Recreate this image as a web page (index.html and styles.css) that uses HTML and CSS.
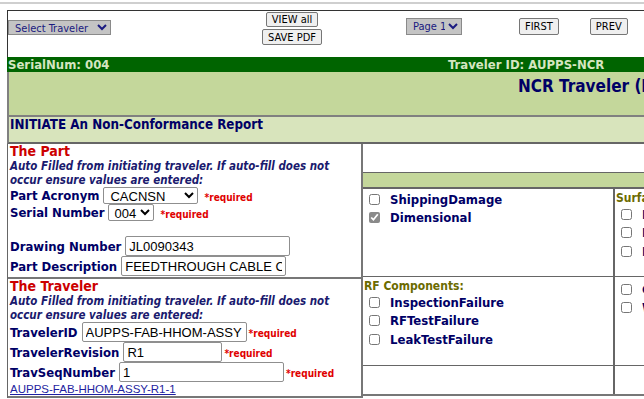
FILE: index.html
```html
<!DOCTYPE html>
<html lang="en">
<head>
    <meta charset="UTF-8">
    <title>NCR Traveler</title>
    <link rel="stylesheet" href="styles.css">
</head>
<body>
    <div class="topline"></div>
    <div class="page">
        <!-- navigation bar -->
        <div class="toolbar">
            <select class="nav-select traveler-select"><option>Select Traveler</option></select>
            <div class="btn-stack">
                <button class="btn">VIEW all</button>
                <button class="btn">SAVE PDF</button>
            </div>
            <select class="nav-select page-select"><option>Page 1</option></select>
            <button class="btn btn-first">FIRST</button>
            <button class="btn btn-prev">PREV</button>
            <button class="btn btn-prev">NEXT</button>
        </div>

        <div class="idbar">
            <span>SerialNum: 004</span>
            <span>Traveler ID: AUPPS-NCR</span>
        </div>
        <div class="titlebar"><h2>NCR Traveler (Non-Conformance Report)</h2></div>
        <div class="stepbar">INITIATE An Non-Conformance Report</div>

        <div class="form-grid">
            <div class="left-col">
                <!-- part info -->
                <div class="block block-part">
                    <h3>The Part</h3>
                    <p class="note">Auto Filled from initiating traveler. If auto-fill does not<br>occur ensure values are entered:</p>
                    <div class="field f-sel">
                        <label>Part Acronym</label>
                        <select class="fld-select acronym"><option>CACNSN</option></select>
                        <span class="req req-sel">*required</span>
                    </div>
                    <div class="field f-sel">
                        <label>Serial Number</label>
                        <select class="fld-select serial"><option>004</option></select>
                        <span class="req req-sel">*required</span>
                    </div>
                    <div class="field f-gap">
                        <label>Drawing Number</label>
                        <input class="txt" type="text" value="JL0090343">
                    </div>
                    <div class="field">
                        <label>Part Description</label>
                        <input class="txt" type="text" value="FEEDTHROUGH CABLE CONNECTOR">
                    </div>
                </div>

                <!-- traveler info -->
                <div class="block block-trav">
                    <h3>The Traveler</h3>
                    <p class="note">Auto Filled from initiating traveler. If auto-fill does not<br>occur ensure values are entered:</p>
                    <div class="field">
                        <label>TravelerID</label>
                        <input class="txt" type="text" value="AUPPS-FAB-HHOM-ASSY">
                        <span class="req">*required</span>
                    </div>
                    <div class="field">
                        <label>TravelerRevision</label>
                        <input class="txt short" type="text" value="R1">
                        <span class="req">*required</span>
                    </div>
                    <div class="field">
                        <label>TravSeqNumber</label>
                        <input class="txt" type="text" value="1">
                        <span class="req">*required</span>
                    </div>
                    <a class="trav-link" href="#">AUPPS-FAB-HHOM-ASSY-R1-1</a>
                </div>
            </div>

            <div class="right-col">
                <div class="spacer"></div>
                <div class="cat-table">
                    <div class="cat-head"></div>
                    <div class="cat-grid">
                        <div class="cat-cell row1 first">
                            <div class="chk"><input type="checkbox"><span>ShippingDamage</span></div>
                            <div class="chk"><input type="checkbox" checked><span>Dimensional</span></div>
                        </div>
                        <div class="cat-cell row1 col2">
                            <div class="cat-label">Surface Finish:</div>
                            <div class="chk"><input type="checkbox"><span>Pitting</span></div>
                            <div class="chk"><input type="checkbox"><span>Porosity</span></div>
                            <div class="chk"><input type="checkbox"><span>Plating</span></div>
                        </div>
                        <div class="cat-cell row2">
                            <div class="cat-label">RF Components:</div>
                            <div class="chk"><input type="checkbox"><span>InspectionFailure</span></div>
                            <div class="chk"><input type="checkbox"><span>RFTestFailure</span></div>
                            <div class="chk"><input type="checkbox"><span>LeakTestFailure</span></div>
                        </div>
                        <div class="cat-cell row2 col2">
                            <div class="chk"><input type="checkbox"><span>Contamination</span></div>
                            <div class="chk"><input type="checkbox"><span>Workmanship</span></div>
                        </div>
                        <div class="cat-cell row3"></div>
                        <div class="cat-cell row3 col2"></div>
                    </div>
                </div>
            </div>
        </div>
    </div>
</body>
</html>
```

FILE: styles.css
```css
body {
    margin: 0;
    overflow: hidden;
    background: #fff;
    font-family: "DejaVu Sans Condensed", "DejaVu Sans", Verdana, sans-serif;
    font-stretch: condensed;
    color: #000080;
}

.topline {
    margin-top: 2px;
    height: 2px;
    background: #cfcfcf;
}

.page {
    width: 1100px;
    margin: 6px 0 0 7px;
}

/* top navigation */
.toolbar {
    display: flex;
    align-items: flex-start;
    height: 46px;
    border-top: 1px solid #333;
    border-left: 1px solid #333;
}

.nav-select {
    height: 15px;
    padding: 0 0 0 2px;
    font-family: inherit;
    font-size: 11px;
    color: #1a1a80;
    background-color: #c4c4c4;
    border: 1px solid #8a8a8a;
    border-radius: 0;
}

.traveler-select {
    width: 103px;
    margin-top: 9px;
}

.page-select {
    width: 56px;
    height: 17px;
    margin: 7px 0 0 84px;
}

.btn-stack {
    display: flex;
    flex-direction: column;
    align-items: center;
    gap: 2px;
    margin: 1px 0 0 151px;
}

.btn {
    height: 15px;
    padding: 0 5px;
    font-family: inherit;
    font-size: 11px;
    line-height: 13px;
    color: #000;
    background: #efefef;
    border: 1px solid #767676;
    border-radius: 2px;
}

.btn-stack .btn + .btn {
    height: 16px;
}

.btn-first {
    height: 17px;
    margin: 7px 0 0 57px;
}

.btn-prev {
    height: 17px;
    margin: 7px 0 0 31px;
}

/* header bars */
.idbar {
    display: grid;
    grid-template-columns: 440px 1fr;
    height: 15px;
    padding-left: 1px;
    background: #006400;
    color: #d5e6c0;
    font-size: 13px;
    font-weight: bold;
    line-height: 15px;
}

.titlebar {
    height: 43px;
    background: #c4d79b;
    border-left: 2px solid #808080;
    border-bottom: 2px solid #808080;
}

.titlebar h2 {
    margin: 0;
    padding: 4px 0 0 509px;
    font-size: 17px;
    line-height: 20px;
    color: #000066;
}

.stepbar {
    height: 25px;
    padding-left: 1px;
    background: #d8e4bc;
    border-left: 2px solid #808080;
    border-bottom: 2px solid #666;
    font-size: 13.3px;
    font-weight: bold;
    line-height: 15px;
    color: #000066;
}

/* form area */
.form-grid {
    display: grid;
    grid-template-columns: 355px 1fr;
    border-left: 1px solid #666;
}

.left-col {
    border-right: 2px solid #777;
}

.block {
    padding-left: 2px;
    border-bottom: 2px solid #777;
}

.block-part {
    height: 133px;
}

.block-trav {
    height: 117px;
}

.block h3 {
    margin: 0;
    font-size: 14px;
    line-height: 15px;
    color: #cc0000;
}

.note {
    margin: 0;
    font-size: 11.5px;
    font-style: italic;
    font-weight: bold;
    line-height: 14px;
    color: #1a1a6e;
}

.field {
    display: flex;
    align-items: center;
    height: 20px;
}

.field.f-sel {
    height: 17px;
}

.field.f-gap {
    margin-top: 15px;
}

.field label {
    margin-right: 4px;
    font-size: 13px;
    font-weight: bold;
    color: #000066;
}

.txt {
    box-sizing: border-box;
    width: 165px;
    height: 20px;
    padding: 0 3px;
    font-family: "Liberation Sans", Arial, sans-serif;
    font-size: 13px;
    color: #000;
    border: 1px solid #8f8f8f;
    border-radius: 2px;
}

.txt.short {
    width: 99px;
}

.fld-select {
    height: 17px;
    padding: 0 0 0 2px;
    font-family: "Liberation Sans", Arial, sans-serif;
    font-size: 13px;
    color: #000;
    background: #fff;
    border: 1px solid #8f8f8f;
    border-radius: 2px;
}

.acronym {
    width: 95px;
}

.serial {
    width: 46px;
    padding-left: 1px;
}

.req {
    margin-left: 2px;
    padding-top: 3px;
    font-size: 10px;
    font-weight: bold;
    color: #e00000;
}

.req-sel {
    margin-left: 6px;
}

.trav-link {
    display: block;
    margin-top: 1px;
    font-family: "Liberation Sans", Arial, sans-serif;
    font-size: 11.5px;
    color: #1f1fa0;
}

/* category checkboxes */
.spacer {
    height: 28px;
}

.cat-table {
    border-top: 1px solid #666;
    border-bottom: 2px solid #777;
}

.cat-head {
    height: 14px;
    background: #c4d79b;
    border-bottom: 2px solid #666;
}

.cat-grid {
    display: grid;
    grid-template-columns: 250px 1fr;
    grid-template-rows: 88px 89px 28px;
}

.cat-cell {
    padding: 3px 0 0 1px;
    border-bottom: 1px solid #666;
}

.cat-cell.first {
    padding-top: 1px;
}

.cat-cell.col2 {
    border-left: 2px solid #666;
}

.cat-cell.row3 {
    border-bottom: 0;
}

.cat-label {
    font-size: 12px;
    font-weight: bold;
    line-height: 13px;
    color: #6b6b00;
}

.chk {
    display: flex;
    align-items: center;
    height: 18.5px;
    font-size: 13px;
    font-weight: bold;
    color: #000066;
}

.chk input {
    width: 11px;
    height: 11px;
    margin: 0 10px 0 5px;
    accent-color: #8a8a8a;
}
```
